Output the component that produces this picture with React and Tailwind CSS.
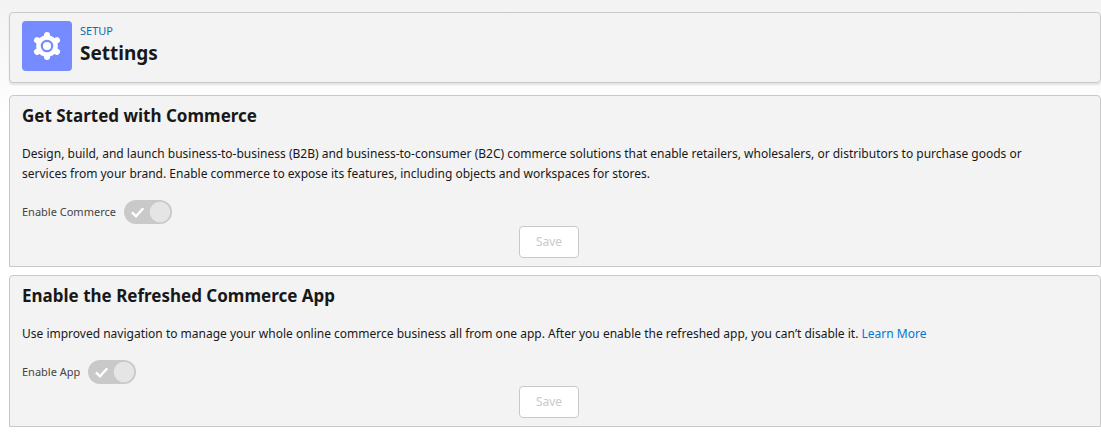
import React from "react";

function Gear() {
  return (
    <svg viewBox="0 0 50 50" className="size-full" fill="#fff" aria-hidden="true">
      <g stroke="#fff" strokeWidth="6" strokeLinecap="round">
        <path d="M25 14v22M15 19.2l20 11.6M35 19.2l-20 11.6" />
      </g>
      <circle cx="25" cy="25" r="10.8" />
      <circle cx="25" cy="25" r="5.2" stroke="#758bff" strokeWidth="2.2" />
    </svg>
  );
}

function Toggle({ id, label }) {
  return (
    <div className="flex h-6 items-center gap-2">
      <label htmlFor={id} className="text-[11px] leading-6 text-[#444]">
        {label}
      </label>
      <span className="relative inline-block h-6 w-12">
        <input
          id={id}
          type="checkbox"
          role="switch"
          defaultChecked
          disabled
          className="block h-6 w-12 appearance-none rounded-full bg-[#c9c9c9]"
        />
        <svg viewBox="0 0 48 24" className="pointer-events-none absolute inset-0 size-full" aria-hidden="true">
          <circle cx="36" cy="12" r="10.3" fill="#e5e5e5" />
          <path d="M8 12.3l4 4 7.3-8" fill="none" stroke="#fff" strokeWidth="2.4" />
        </svg>
      </span>
    </div>
  );
}

function Card({ title, toggleId, toggleLabel, children }) {
  return (
    <section className="rounded-t border border-[#c9c9c9] bg-[#f3f3f3] py-2 pr-6 pl-3">
      <h2 className="text-[17px] leading-6 font-bold text-[#181818]">{title}</h2>
      <p className="mt-4 pr-4 text-[12px] leading-5 text-[#181818]">{children}</p>
      <div className="mt-4">
        <Toggle id={toggleId} label={toggleLabel} />
      </div>
      <div className="mt-0.5 flex justify-center">
        <button
          type="button"
          disabled
          className="h-8 w-[60px] rounded border border-[#c9c9c9] bg-white text-[12px] text-[#c9c9c9]"
        >
          Save
        </button>
      </div>
    </section>
  );
}

export default function App() {
  return (
    <main className="bg-linear-to-b from-[#f3f3f3] to-white to-[120px] pt-3 pb-5 pl-[9px] font-['Noto_Sans','Open_Sans',sans-serif]">
      <header className="flex h-[71px] gap-2 rounded border border-[#c9c9c9] bg-[#f3f3f3] px-3 pt-2 shadow-[0_2px_2px_rgba(0,0,0,0.1)]">
        <div className="size-[50px] rounded bg-[#758bff]">
          <Gear />
        </div>
        <div>
          <p className="text-[11px] leading-5 text-[#0b6cb0]">SETUP</p>
          <h1 className="text-[19px] leading-6 font-bold text-[#181818]">Settings</h1>
        </div>
      </header>
      <div className="mt-3 flex flex-col gap-2">
        <Card title="Get Started with Commerce" toggleId="commerce" toggleLabel="Enable Commerce">
          Design, build, and launch business-to-business (B2B) and business-to-consumer (B2C) commerce solutions that
          enable retailers, wholesalers, or distributors to purchase goods or services from your brand. Enable commerce
          to expose its features, including objects and workspaces for stores.
        </Card>
        <Card title="Enable the Refreshed Commerce App" toggleId="app" toggleLabel="Enable App">
          Use improved navigation to manage your whole online commerce business all from one app. After you enable the
          refreshed app, you can’t disable it.{" "}
          <a href="#learn-more" className="text-[#0176d3]">
            Learn More
          </a>
        </Card>
      </div>
    </main>
  );
}
